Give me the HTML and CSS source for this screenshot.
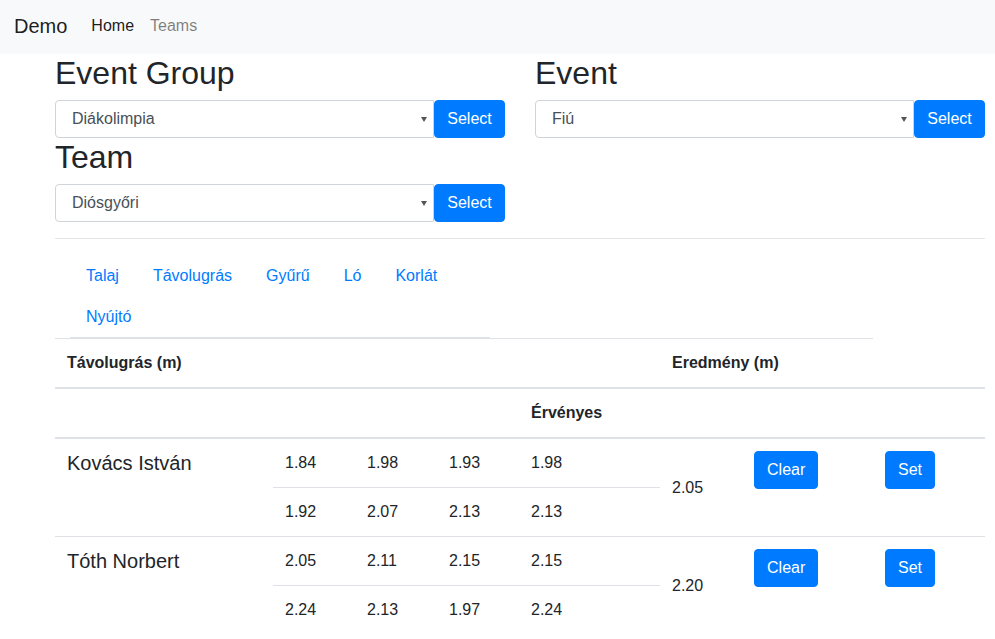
FILE: index.html
```html
<!DOCTYPE html>
<html lang="hu">
<head>
<meta charset="utf-8">
<title>Demo</title>
<link rel="stylesheet" href="styles.css">
</head>
<body>
<nav class="navbar">
  <a class="brand" href="#">Demo</a>
  <a class="nav-item active" href="#">Home</a>
  <a class="nav-item" href="#">Teams</a>
</nav>
<main class="container">
  <div class="selectors">
    <div class="col">
      <h2 class="heading">Event Group</h2>
      <div class="picker">
        <div class="select-box">
          <select class="select"><option>Diákolimpia</option></select>
        </div>
        <button class="btn">Select</button>
      </div>
      <h2 class="heading">Team</h2>
      <div class="picker">
        <div class="select-box">
          <select class="select"><option>Diósgyőri</option></select>
        </div>
        <button class="btn">Select</button>
      </div>
    </div>
    <div class="col">
      <h2 class="heading">Event</h2>
      <div class="picker">
        <div class="select-box">
          <select class="select"><option>Fiú</option></select>
        </div>
        <button class="btn">Select</button>
      </div>
    </div>
  </div>
  <hr class="divider">
  <ul class="tabs">
    <li><a class="tab-link" href="#">Talaj</a></li>
    <li><a class="tab-link" href="#">Távolugrás</a></li>
    <li><a class="tab-link" href="#">Gyűrű</a></li>
    <li><a class="tab-link" href="#">Ló</a></li>
    <li><a class="tab-link" href="#">Korlát</a></li>
    <li><a class="tab-link" href="#">Nyújtó</a></li>
  </ul>
  <table class="results">
    <colgroup>
      <col class="c-name"><col class="c-num"><col class="c-num"><col class="c-num"><col class="c-valid"><col class="c-res"><col class="c-clear"><col class="c-set">
    </colgroup>
    <thead>
      <tr class="head-1">
        <th colspan="5">Távolugrás (m)</th>
        <th colspan="2">Eredmény (m)</th>
        <th class="blank"></th>
      </tr>
      <tr class="head-2">
        <th></th><th></th><th></th><th></th><th>Érvényes</th><th></th><th></th><th></th>
      </tr>
    </thead>
    <tbody>
      <tr class="row-a first">
        <td rowspan="2" class="name">Kovács István</td>
        <td>1.84</td><td>1.98</td><td>1.93</td><td>1.98</td>
        <td rowspan="2" class="result">2.05</td>
        <td rowspan="2"><button class="btn">Clear</button></td>
        <td rowspan="2"><button class="btn">Set</button></td>
      </tr>
      <tr class="row-b">
        <td>1.92</td><td>2.07</td><td>2.13</td><td>2.13</td>
      </tr>
      <tr class="row-a">
        <td rowspan="2" class="name">Tóth Norbert</td>
        <td>2.05</td><td>2.11</td><td>2.15</td><td>2.15</td>
        <td rowspan="2" class="result">2.20</td>
        <td rowspan="2"><button class="btn">Clear</button></td>
        <td rowspan="2"><button class="btn">Set</button></td>
      </tr>
      <tr class="row-b">
        <td>2.24</td><td>2.13</td><td>1.97</td><td>2.24</td>
      </tr>
    </tbody>
  </table>
</main>
</body>
</html>
```
FILE: styles.css
```css
* { box-sizing: border-box; }

body {
  margin: 0;
  font-family: "Liberation Sans", Arial, sans-serif;
  font-size: 16px;
  line-height: 1.5;
  color: #212529;
  background: #fff;
}

a { text-decoration: none; }

.navbar {
  display: flex;
  align-items: center;
  height: 53.6px;
  padding: 0 14px 2px;
  background: #f8f9fa;
}

.brand {
  font-size: 20px;
  line-height: 30px;
  color: rgba(0, 0, 0, 0.9);
  margin-right: 16px;
}

.nav-item {
  padding: 8px;
  color: rgba(0, 0, 0, 0.5);
  line-height: 24px;
}

.nav-item.active { color: rgba(0, 0, 0, 0.9); }

.container {
  padding: 0 10px 0 55px;
}

.selectors {
  display: grid;
  grid-template-columns: 450px 450px;
  column-gap: 30px;
}

.heading {
  margin: 0 0 8px;
  font-size: 32px;
  line-height: 1.2;
  font-weight: 500;
}

.picker {
  display: flex;
}

.select-box {
  position: relative;
  flex: 1;
}

.select-box::after {
  content: "";
  position: absolute;
  right: 7px;
  top: 17px;
  border-left: 3.5px solid transparent;
  border-right: 3.5px solid transparent;
  border-top: 5px solid #555;
  pointer-events: none;
}

.select {
  -webkit-appearance: none;
  appearance: none;
  display: block;
  width: 100%;
  height: 38px;
  padding: 6px 28px 6px 16px;
  font-family: inherit;
  font-size: 16px;
  line-height: 24px;
  color: #495057;
  background: #fff;
  border: 1px solid #ced4da;
  border-radius: 4px 0 0 4px;
}

.btn {
  display: inline-block;
  padding: 6px 12px;
  font-family: inherit;
  font-size: 16px;
  line-height: 24px;
  color: #fff;
  background: #007bff;
  border: 1px solid #007bff;
  border-radius: 4px;
  cursor: pointer;
}

.picker .btn {
  flex: 0 0 71px;
  padding: 6px 0;
  text-align: center;
}

.divider {
  margin: 16px 0 0;
  border: 0;
  border-top: 1px solid rgba(0, 0, 0, 0.1);
  height: 0;
}

.tabs {
  list-style: none;
  margin: 16px 0 0 15px;
  padding: 0;
  width: 420px;
  display: flex;
  flex-wrap: wrap;
  border-bottom: 1px solid #dee2e6;
}

.tab-link {
  display: block;
  padding: 9px 17px 8px 15px;
  border-left: 1px solid transparent;
  border-right: 1px solid transparent;
  line-height: 24px;
  color: #007bff;
}

.results {
  width: 930px;
  table-layout: fixed;
  border-collapse: separate;
  border-spacing: 0;
}

.c-name { width: 218px; }
.c-num { width: 82px; }
.c-valid { width: 141px; }
.c-res { width: 82px; }
.c-clear { width: 131px; }
.c-set { width: 112px; }

.results th,
.results td {
  padding: 12px;
  text-align: left;
  line-height: 24px;
}

.results th {
  font-weight: bold;
  vertical-align: bottom;
  border-bottom: 2px solid #dee2e6;
}

.head-1 th { border-top: 1px solid #dee2e6; }
.head-1 th.blank { border-top: 0; }

.results td { vertical-align: top; }

.row-a td { border-top: 1px solid #dee2e6; }
.row-a.first td { border-top: 0; }
.row-b td { border-top: 1px solid #dee2e6; }

.results td.name {
  font-size: 20px;
  line-height: 24px;
}

.results td.result { vertical-align: middle; }
```
